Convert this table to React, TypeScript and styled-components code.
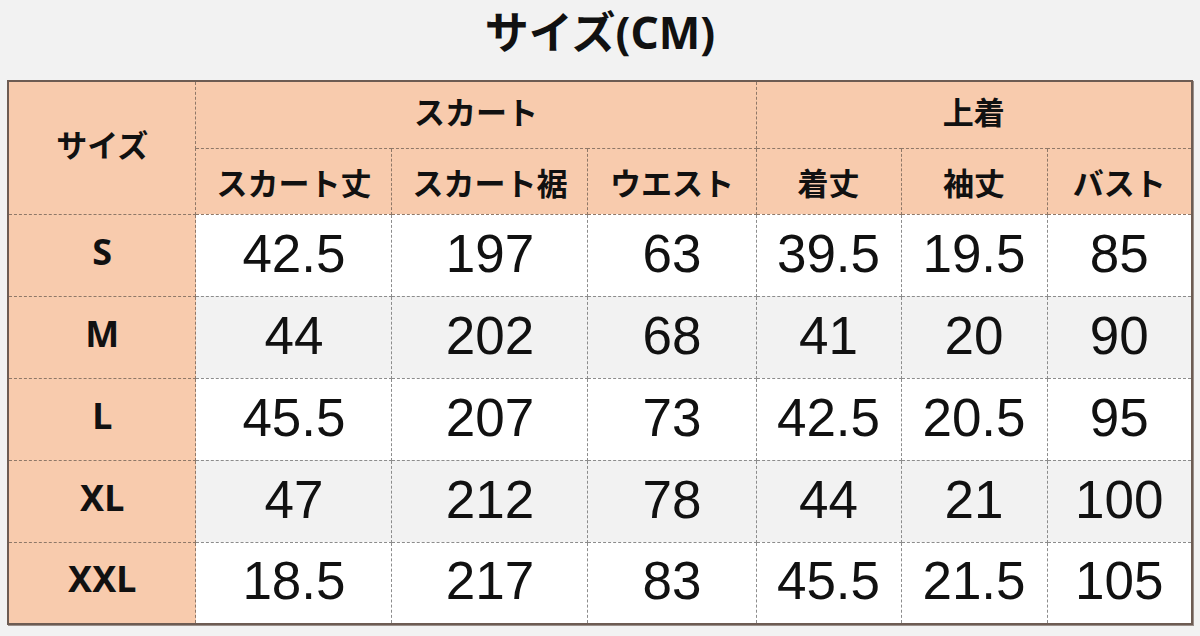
import React from "react";
import styled, { createGlobalStyle } from "styled-components";

const GlobalStyle = createGlobalStyle`
  html, body {
    margin: 0;
    padding: 0;
    background: #f2f2f2;
  }
`;

const columns = [188, 196, 196, 168, 145, 146, 145];

const rows = [
  { size: "S", values: ["42.5", "197", "63", "39.5", "19.5", "85"] },
  { size: "M", values: ["44", "202", "68", "41", "20", "90"] },
  { size: "L", values: ["45.5", "207", "73", "42.5", "20.5", "95"] },
  { size: "XL", values: ["47", "212", "78", "44", "21", "100"] },
  { size: "XXL", values: ["18.5", "217", "83", "45.5", "21.5", "105"] },
];

const Page = styled.div`
  width: 1200px;
  height: 636px;
  display: flex;
  flex-direction: column;
  align-items: center;
  box-sizing: border-box;
  padding: 0 8px;
`;

const Title = styled.h1`
  margin: 0;
  height: 80px;
  display: flex;
  align-items: center;
  padding-bottom: 20px;
  box-sizing: border-box;
  font-family: "Noto Sans", "Noto Sans CJK JP", sans-serif;
  font-weight: 700;
  font-size: 44px;
  color: #111;
`;

const Table = styled.table`
  width: 1184px;
  table-layout: fixed;
  border-collapse: collapse;
  border: 2px solid #6d5c53;
  box-shadow: 1px 1px 0 #9a8f8a;
`;

const HeadRow = styled.tr<{ $h: number }>`
  height: ${(p) => p.$h}px;
`;

const HeadCell = styled.th<{ $lift?: boolean }>`
  background: #f8cbad;
  border: 1px dashed #8f7868;
  padding: 0 0 ${(p) => (p.$lift ? 8 : 0)}px;
  font-family: "Noto Sans CJK JP", "Noto Sans", sans-serif;
  font-weight: 700;
  font-size: 31px;
  color: #111;
  white-space: nowrap;
`;

const DataRow = styled.tr`
  height: 82px;
`;

const SizeCell = styled.th`
  background: #f8cbad;
  border: 1px dashed #8f7868;
  padding: 0 0 8px;
  font-family: "Noto Sans", "Noto Sans CJK JP", sans-serif;
  font-weight: 700;
  font-size: 36px;
  color: #111;
`;

const ValueCell = styled.td<{ $alt: boolean }>`
  background: ${(p) => (p.$alt ? "#f2f2f2" : "#ffffff")};
  border: 1px dashed #8c8c8c;
  padding: 0 0 4px;
  text-align: center;
  font-family: "Liberation Sans", Arial, sans-serif;
  font-size: 53px;
  color: #111;
`;

export default function App() {
  return (
    <>
      <GlobalStyle />
      <Page>
        <Title>サイズ(CM)</Title>
        <Table>
          <colgroup>
            {columns.map((w, i) => (
              <col key={i} style={{ width: w }} />
            ))}
          </colgroup>
          <thead>
            <HeadRow $h={67}>
              <HeadCell rowSpan={2} $lift>
                サイズ
              </HeadCell>
              <HeadCell colSpan={3} $lift>
                スカート
              </HeadCell>
              <HeadCell colSpan={3} $lift>
                上着
              </HeadCell>
            </HeadRow>
            <HeadRow $h={66}>
              <HeadCell>スカート丈</HeadCell>
              <HeadCell>スカート裾</HeadCell>
              <HeadCell>ウエスト</HeadCell>
              <HeadCell>着丈</HeadCell>
              <HeadCell>袖丈</HeadCell>
              <HeadCell>バスト</HeadCell>
            </HeadRow>
          </thead>
          <tbody>
            {rows.map((row, r) => (
              <DataRow key={row.size}>
                <SizeCell>{row.size}</SizeCell>
                {row.values.map((v, i) => (
                  <ValueCell key={i} $alt={r % 2 === 1}>
                    {v}
                  </ValueCell>
                ))}
              </DataRow>
            ))}
          </tbody>
        </Table>
      </Page>
    </>
  );
}
